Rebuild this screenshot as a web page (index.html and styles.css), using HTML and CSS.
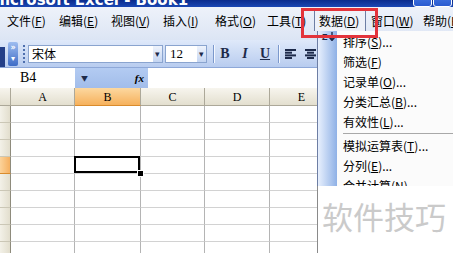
FILE: index.html
```html
<!DOCTYPE html>
<html lang="zh-CN">
<head>
    <meta charset="UTF-8">
    <title>Microsoft Excel - Book1</title>
    <link rel="stylesheet" href="styles.css">
</head>
<body>
<div class="window">
    <div class="titlebar">
        <span class="title-text">Microsoft Excel - Book1</span>
        <span class="win-btn first"></span>
        <span class="win-btn"></span>
    </div>

    <div class="menubar">
        <span class="grip"></span>
        <span class="menu-item">文件(<u>F</u>)</span>
        <span class="menu-item">编辑(<u>E</u>)</span>
        <span class="menu-item">视图(<u>V</u>)</span>
        <span class="menu-item">插入(<u>I</u>)</span>
        <span class="menu-item">格式(<u>O</u>)</span>
        <span class="menu-item">工具(<u>T</u>)</span>
        <span class="menu-item open">数据(<u>D</u>)</span>
        <span class="menu-item">窗口(<u>W</u>)</span>
        <span class="menu-item">帮助(<u>H</u>)</span>
    </div>

    <div class="toolbar">
        <span class="tb-end"></span>
        <span class="tb-chevron"><span>»</span><span>▾</span></span>
        <span class="tb-grip"></span>
        <div class="combo fontbox"><span class="combo-text">宋体</span><span class="combo-arrow">▾</span></div>
        <div class="combo sizebox"><span class="combo-text num">12</span><span class="combo-arrow">▾</span></div>
        <span class="tb-sep"></span>
        <span class="tb-btn bold">B</span>
        <span class="tb-btn italic">I</span>
        <span class="tb-btn under">U</span>
        <span class="tb-sep small"></span>
        <span class="tb-btn">
            <svg width="11" height="10" viewBox="0 0 11 10">
                <rect x="0" y="0" width="11" height="2" fill="#1d2a4a"/>
                <rect x="0" y="2.7" width="7" height="2" fill="#1d2a4a"/>
                <rect x="0" y="5.4" width="11" height="2" fill="#1d2a4a"/>
                <rect x="0" y="8" width="7" height="2" fill="#1d2a4a"/>
            </svg>
        </span>
        <span class="tb-btn">
            <svg width="11" height="10" viewBox="0 0 11 10">
                <rect x="0" y="0" width="11" height="2" fill="#1d2a4a"/>
                <rect x="2" y="2.7" width="7" height="2" fill="#1d2a4a"/>
                <rect x="0" y="5.4" width="11" height="2" fill="#1d2a4a"/>
                <rect x="2" y="8" width="7" height="2" fill="#1d2a4a"/>
            </svg>
        </span>
    </div>

    <div class="formulabar">
        <div class="namebox">B4</div>
        <div class="name-drop"><span class="drop-arrow">▼</span><span class="fx">fx</span></div>
        <div class="formula-input"></div>
    </div>

    <div class="sheet">
        <div class="corner"></div><div class="ch">A</div><div class="ch sel">B</div><div class="ch">C</div><div class="ch">D</div><div class="ch">E</div><div class="ch">F</div>
        <div class="rh"></div><div class="c"></div><div class="c"></div><div class="c"></div><div class="c"></div><div class="c"></div><div class="c"></div>
        <div class="rh"></div><div class="c"></div><div class="c"></div><div class="c"></div><div class="c"></div><div class="c"></div><div class="c"></div>
        <div class="rh"></div><div class="c"></div><div class="c"></div><div class="c"></div><div class="c"></div><div class="c"></div><div class="c"></div>
        <div class="rh sel"></div><div class="c"></div><div class="c active"><span class="fill-handle"></span></div><div class="c"></div><div class="c"></div><div class="c"></div><div class="c"></div>
        <div class="rh"></div><div class="c"></div><div class="c"></div><div class="c"></div><div class="c"></div><div class="c"></div><div class="c"></div>
        <div class="rh"></div><div class="c"></div><div class="c"></div><div class="c"></div><div class="c"></div><div class="c"></div><div class="c"></div>
        <div class="rh"></div><div class="c"></div><div class="c"></div><div class="c"></div><div class="c"></div><div class="c"></div><div class="c"></div>
        <div class="rh"></div><div class="c"></div><div class="c"></div><div class="c"></div><div class="c"></div><div class="c"></div><div class="c"></div>
        <div class="rh"></div><div class="c"></div><div class="c"></div><div class="c"></div><div class="c"></div><div class="c"></div><div class="c"></div>
    </div>

    <!-- open "数据" menu -->
    <div class="dropdown">
        <div class="mi"><span class="sort-icon">Z<svg width="6" height="9" viewBox="0 0 6 9"><path d="M3 0 V8 M0.5 5.5 L3 8.5 L5.5 5.5" stroke="#1d2a4a" stroke-width="1.4" fill="none"/></svg></span>排序(<u>S</u>)...</div>
        <div class="mi">筛选(<u>F</u>)</div>
        <div class="mi">记录单(<u>O</u>)...</div>
        <div class="mi">分类汇总(<u>B</u>)...</div>
        <div class="mi">有效性(<u>L</u>)...</div>
        <div class="msep"></div>
        <div class="mi">模拟运算表(<u>T</u>)...</div>
        <div class="mi">分列(<u>E</u>)...</div>
        <div class="mi">合并计算(<u>N</u>)...</div>
    </div>

    <div class="highlight"></div>
    <div class="watermark">软件技巧</div>
</div>
</body>
</html>
```

FILE: styles.css
```css
* {
    box-sizing: border-box;
}

body {
    margin: 0;
    width: 453px;
    height: 253px;
    overflow: hidden;
    background: #fff;
    color: #000;
    font-family: "Noto Sans CJK SC", "Liberation Sans", sans-serif;
    font-size: 12px;
}

.window {
    position: relative;
    width: 453px;
    height: 253px;
    overflow: hidden;
}

/* title bar, only its lower edge is in the picture */
.titlebar {
    display: flex;
    height: 7px;
    overflow: hidden;
    background: linear-gradient(#0b2c8c, #1a47b4);
}

.title-text {
    color: #fff;
    font: bold 15px "DejaVu Sans", sans-serif;
    line-height: 16px;
    margin-top: -8px;
    margin-left: -10px;
    white-space: nowrap;
}

.win-btn {
    width: 19px;
    height: 16px;
    margin-top: -9px;
    margin-right: 1px;
    border: 1px solid #fff;
    border-radius: 3px;
    background: linear-gradient(#4d80e8, #2a5bd0);
}

.win-btn.first {
    margin-left: auto;
}

/* menu bar */
.menubar {
    display: flex;
    align-items: flex-start;
    height: 33px;
    padding-top: 3px;
    background: linear-gradient(#eef2fa, #dce5f4);
}

.grip {
    width: 3px;
    height: 13px;
    margin-top: 5px;
    margin-right: 2px;
    background: #2b3f78;
}

.menu-item {
    flex: none;
    width: 52px;
    height: 21px;
    padding-left: 5px;
    line-height: 21px;
    white-space: nowrap;
}

.menu-item u {
    text-decoration-thickness: 1px;
}

.menu-item.open {
    background: #eef1f8;
    border: 1px solid #6d7ea4;
    border-bottom: none;
    padding-left: 4px;
    line-height: 19px;
}

/* formatting toolbar */
.toolbar {
    display: flex;
    align-items: center;
    height: 28px;
    background: linear-gradient(#dfe9fa, #b8ccef);
    border-bottom: 1px solid #8ea8d8;
}

.tb-end {
    align-self: flex-end;
    width: 5px;
    height: 20px;
    background: #243f88;
}

.tb-chevron {
    display: flex;
    flex-direction: column;
    align-items: center;
    width: 10px;
    height: 24px;
    margin-left: 3px;
    border-radius: 2px;
    background: linear-gradient(#9ebdf0, #3e6cc6);
    color: #fff;
    font: bold 8px "DejaVu Sans", sans-serif;
    line-height: 11px;
}

.tb-grip {
    width: 2px;
    height: 18px;
    margin-left: 5px;
    border-left: 2px dotted #4e6fae;
}

.combo {
    display: flex;
    height: 18px;
    background: #fff;
    border: 1px solid #8aa4cf;
}

.fontbox {
    width: 135px;
    margin-left: 3px;
}

.sizebox {
    width: 42px;
    margin-left: 2px;
}

.combo-text {
    flex: 1;
    padding-left: 3px;
    line-height: 16px;
}

.combo-text.num {
    padding-left: 4px;
    font-family: "Liberation Serif", serif;
    font-size: 13px;
}

.combo-arrow {
    width: 9px;
    text-align: center;
    font-size: 9px;
    line-height: 16px;
    color: #1d2a4a;
    background: linear-gradient(#eef3fc, #c4d5f2);
}

.tb-sep {
    width: 1px;
    height: 18px;
    margin: 0 1px 0 6px;
    background: #7b98cc;
    box-shadow: 1px 0 0 #f4f8ff;
}

.tb-sep.small {
    margin-left: 3px;
}

.tb-btn {
    display: flex;
    align-items: center;
    justify-content: center;
    width: 20px;
    height: 20px;
    font-family: "Liberation Serif", serif;
    font-size: 14px;
    color: #1d2a4a;
}

.tb-btn.bold {
    font-weight: bold;
}

.tb-btn.italic {
    font-style: italic;
    font-weight: bold;
}

.tb-btn.under {
    font-weight: bold;
    text-decoration: underline;
}

/* name box and formula bar */
.formulabar {
    display: flex;
    height: 20px;
    background: #fff;
}

.namebox {
    width: 75px;
    padding-left: 20px;
    font-family: "Liberation Serif", serif;
    font-size: 14px;
    line-height: 20px;
}

.name-drop {
    display: flex;
    justify-content: space-between;
    align-items: center;
    width: 73px;
    padding: 0 4px 0 6px;
    background: linear-gradient(#b3cbf2, #a2bdea);
}

.drop-arrow {
    font-size: 7px;
    color: #1d2a4a;
}

.fx {
    font: italic bold 11px "Liberation Serif", serif;
}

.formula-input {
    flex: 1;
}

/* worksheet grid */
.sheet {
    display: grid;
    grid-template-columns: 11px 64px 66px 64px 65px 64px 64px;
    grid-template-rows: 18px repeat(9, 17px);
}

.corner,
.ch {
    background: linear-gradient(#f7f5ee, #e3dfcf);
    border-right: 1px solid #aca899;
    border-bottom: 1px solid #aca899;
}

.ch {
    text-align: center;
    font-family: "Liberation Serif", serif;
    font-size: 12px;
    line-height: 18px;
}

.ch.sel {
    background: linear-gradient(#fcd8a0, #f6b15c);
    border-bottom-color: #d98b2c;
}

.rh {
    background: linear-gradient(90deg, #f3f1e8, #e2decd);
    border-right: 1px solid #8e8b7c;
    border-bottom: 1px solid #cbc7b6;
}

.rh.sel {
    background: linear-gradient(90deg, #fcd39a, #f5b060);
    border-bottom-color: #d98b2c;
}

.c {
    border-right: 1px solid #b4b4b4;
    border-bottom: 1px solid #d2d2d2;
}

.c.active {
    position: relative;
}

.c.active::after {
    content: "";
    position: absolute;
    left: -1px;
    top: -1px;
    right: 0;
    bottom: 0;
    border: 2px solid #000;
}

.fill-handle {
    position: absolute;
    right: -3px;
    bottom: -3px;
    z-index: 1;
    width: 5px;
    height: 5px;
    background: #000;
    outline: 1px solid #fff;
}

/* data menu */
.dropdown {
    position: absolute;
    left: 317px;
    top: 31px;
    width: 150px;
    height: 155px;
    padding-top: 1px;
    border-left: 1px solid #6d7ea4;
    background: linear-gradient(90deg, #e8f0fd 0, #8fb1e6 19px, #fbfbfb 19px);
}

.mi {
    position: relative;
    height: 20px;
    overflow: hidden;
    padding-left: 25px;
    line-height: 20px;
    white-space: nowrap;
}

.msep {
    height: 3px;
    margin-top: 1px;
    margin-left: 25px;
    border-top: 1px solid #a8a8a8;
}

.sort-icon {
    position: absolute;
    left: 4px;
    top: 0;
    display: flex;
    align-items: flex-start;
    font: bold 9px "Liberation Sans", sans-serif;
    line-height: 10px;
    color: #1d2a4a;
}

.sort-icon svg {
    margin-left: 1px;
}

.highlight {
    position: absolute;
    left: 301px;
    top: 8px;
    width: 77px;
    height: 30px;
    border: 3px solid #e3343b;
}

.watermark {
    position: absolute;
    left: 317px;
    top: 186px;
    right: 0;
    bottom: 0;
    padding: 14px 0 0 4px;
    border-left: 1px solid #8a8a8a;
    background: #fff;
    color: #cacaca;
    font-size: 31px;
    line-height: 31px;
    white-space: nowrap;
}
```
